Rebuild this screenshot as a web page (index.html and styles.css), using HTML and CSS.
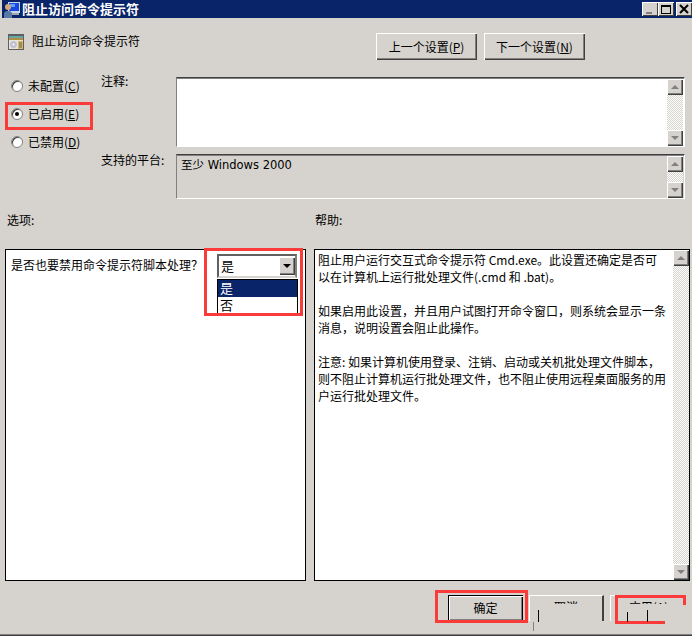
FILE: index.html
```html
<!DOCTYPE html>
<html lang="zh">
<head>
<meta charset="utf-8">
<title>阻止访问命令提示符</title>
<link rel="stylesheet" href="styles.css">
</head>
<body>
<div class="dialog">
  <div class="titlebar">
    <svg class="title-icon" viewBox="0 0 17 17" width="17" height="17">
      <rect x="5" y="1" width="12" height="11" fill="#c8d4e8"/>
      <rect x="6" y="2" width="10" height="8" fill="#1848e0"/>
      <rect x="7" y="3" width="5" height="3" fill="#60a0f8"/>
      <rect x="8" y="12" width="8" height="2" fill="#a0a8b0"/>
      <circle cx="5" cy="6" r="3" fill="#d8a878"/>
      <path d="M1 17 V13 Q1 10 5 10 Q9 10 9 13 V17 Z" fill="#5878a8"/>
    </svg>
    <span class="title-text">阻止访问命令提示符</span>
    <div class="caption-buttons">
      <span class="caption-btn"><span class="glyph-min"></span></span>
      <span class="caption-btn"><span class="glyph-max"></span></span>
      <span class="caption-btn caption-close">
        <svg viewBox="0 0 10 10" width="10" height="10"><path d="M1 1 L9 9 M9 1 L1 9" stroke="#000" stroke-width="2" fill="none"/></svg>
      </span>
    </div>
  </div>

  <div class="header">
    <svg class="policy-icon" viewBox="0 0 16 16" width="16" height="16">
      <rect x="0" y="0" width="16" height="16" fill="#5a6068"/>
      <rect x="1" y="2" width="14" height="2" fill="#68a8a0"/>
      <rect x="1" y="4" width="14" height="2" fill="#b09048"/>
      <rect x="1" y="6" width="14" height="9" fill="#e8e4d8"/>
      <circle cx="5.5" cy="10.5" r="3.5" fill="#c0c0d0"/>
      <circle cx="5.5" cy="10.5" r="1" fill="#fff"/>
      <rect x="10" y="7" width="5" height="8" fill="#d8b860"/>
      <path d="M11 9h3M11 11h3M11 13h3" stroke="#606060" stroke-width="1"/>
    </svg>
    <span class="header-title">阻止访问命令提示符</span>
    <button class="btn nav-btn">上一个设置(<u>P</u>)</button>
    <button class="btn nav-btn">下一个设置(<u>N</u>)</button>
  </div>

  <div class="settings">
    <div class="radios">
      <label class="radio-row"><span class="radio"></span><span>未配置(<u>C</u>)</span></label>
      <label class="radio-row"><span class="radio radio-on"></span><span>已启用(<u>E</u>)</span></label>
      <label class="radio-row"><span class="radio"></span><span>已禁用(<u>D</u>)</span></label>
    </div>
    <div class="fields">
      <div class="field-label">注释:</div>
      <div class="comment-box">
        <div class="box-fill"></div>
        <div class="scrollbar">
          <span class="sb-btn"><span class="arrow-up"></span></span>
          <span class="sb-track"></span>
          <span class="sb-btn"><span class="arrow-down"></span></span>
        </div>
      </div>
      <div class="field-label">支持的平台:</div>
      <div class="platform-box">
        <div class="box-fill platform-text">至少 Windows 2000</div>
        <div class="scrollbar">
          <span class="sb-btn"><span class="arrow-up"></span></span>
          <span class="sb-track"></span>
          <span class="sb-btn"><span class="arrow-down"></span></span>
        </div>
      </div>
    </div>
  </div>

  <div class="section-labels">
    <span>选项:</span>
    <span>帮助:</span>
  </div>

  <div class="panels">
    <div class="panel options-panel">
      <span class="option-question">是否也要禁用命令提示符脚本处理？</span>
      <div class="combo-wrap">
        <div class="combo">
          <span class="combo-value">是</span>
          <span class="combo-btn"><span class="arrow-down arrow-black"></span></span>
        </div>
        <div class="combo-list">
          <div class="combo-item combo-selected">是</div>
          <div class="combo-item">否</div>
        </div>
      </div>
    </div>
    <div class="panel help-panel">
      <div class="help-text">
        <p>阻止用户运行交互式命令提示符 Cmd.exe。此设置还确定是否可<br>以在计算机上运行批处理文件(.cmd 和 .bat)。</p>
        <p>如果启用此设置，并且用户试图打开命令窗口，则系统会显示一条<br>消息，说明设置会阻止此操作。</p>
        <p>注意: 如果计算机使用登录、注销、启动或关机批处理文件脚本，<br>则不阻止计算机运行批处理文件，也不阻止使用远程桌面服务的用<br>户运行批处理文件。</p>
      </div>
      <div class="scrollbar">
        <span class="sb-btn"><span class="arrow-up"></span></span>
        <span class="sb-track"></span>
        <span class="sb-btn"><span class="arrow-down"></span></span>
      </div>
    </div>
  </div>

  <div class="footer">
    <button class="btn ok-btn">确定</button>
    <div class="torn-btn cancel-btn"><span class="torn-text">取消</span></div>
    <div class="torn-btn apply-btn"><span class="torn-text">应用(A)</span></div>
  </div>

  <div class="mark mark-radio"></div>
  <div class="mark mark-combo"></div>
  <div class="mark mark-ok"></div>
  <div class="mark-apply-top"></div>
  <div class="mark-apply-right"></div>
  <div class="mark-apply-left"></div>
  <div class="mark-apply-bottom"></div>
  <div class="tick tick-a"></div>
  <div class="tick tick-b"></div>
  <div class="tick tick-c"></div>
  <div class="tick tick-d"></div>
</div>
</body>
</html>
```
FILE: styles.css
```css
* { box-sizing: border-box; }
html, body { margin: 0; padding: 0; }
body {
  width: 692px;
  height: 636px;
  overflow: hidden;
  background: #d6d3ce;
  font: 12px/14px "Noto Sans CJK SC", "Liberation Sans", sans-serif;
  color: #000;
}
.dialog {
  position: relative;
  width: 692px;
  height: 636px;
  overflow: hidden;
  background: #d6d3ce;
  border-bottom: 1px solid #404040;
  box-shadow: inset 0 -1px 0 #808080;
}
p { margin: 0 0 17px; }

.titlebar {
  height: 18px;
  margin-left: 2px;
  padding-left: 1px;
  display: flex;
  align-items: center;
  background: #0a246a;
  color: #fff;
}
.title-icon { flex: none; }
.title-text { margin-left: 2px; font-size: 13px; font-weight: 700; }
.caption-buttons { margin-left: auto; display: flex; align-items: center; }
.caption-btn {
  width: 16px;
  height: 14px;
  display: flex;
  align-items: center;
  justify-content: center;
  background: #d6d3ce;
  box-shadow: inset 1px 1px 0 #fff, inset -1px -1px 0 #404040;
}
.caption-close { margin-left: 2px; }
.glyph-min { width: 6px; height: 2px; background: #808080; margin-top: 8px; margin-right: 2px; }
.glyph-max { width: 10px; height: 9px; border: 1px solid #000; border-top-width: 2px; }

.header {
  height: 56px;
  padding: 15px 107px 0 8px;
  display: flex;
  align-items: flex-start;
  gap: 7px;
}
.policy-icon { margin-top: 1px; flex: none; }
.header-title { margin-left: 1px; margin-right: auto; line-height: 16px; }

.btn {
  padding: 0;
  border: 0;
  background: #d6d3ce;
  font: inherit;
  color: #000;
  box-shadow: inset 1px 1px 0 #fff, inset -1px -1px 0 #404040, inset -2px -2px 0 #808080;
}
.nav-btn { width: 101px; height: 27px; }

.settings { display: flex; height: 126px; }
.radios {
  width: 101px;
  flex: none;
  padding: 3px 0 0 11px;
  display: flex;
  flex-direction: column;
  gap: 10px;
}
.radio-row { height: 18px; display: flex; align-items: center; gap: 5px; }
.radio {
  width: 12px;
  height: 12px;
  border-radius: 50%;
  background: #fff;
  border: 1px solid #808080;
  box-shadow: inset 1px 1px 0 #404040;
  display: flex;
  align-items: center;
  justify-content: center;
}
.radio-on::after { content: ""; width: 4px; height: 4px; border-radius: 50%; background: #000; }

.fields {
  display: grid;
  grid-template-columns: 75px 509px;
  grid-template-rows: 79px 47px;
}

.comment-box, .platform-box {
  display: flex;
  border: 1px solid #fff;
  border-top-color: #404040;
  border-left-color: #808080;
  box-shadow: inset 0 1px 0 #808080;
}
.comment-box { height: 70px; margin-top: 3px; background: #fff; }
.platform-box { height: 45px; margin-top: 1px; background: #d6d3ce; }
.box-fill { flex: 1; min-width: 0; }
.platform-text { padding: 3px 0 0 4px; font-family: "DejaVu Sans", "Noto Sans CJK SC", sans-serif; font-size: 11.5px; }

.scrollbar { width: 16px; margin-right: 1px; flex: none; display: flex; flex-direction: column; }
.comment-box .scrollbar, .platform-box .scrollbar { margin-top: 1px; }
.sb-btn {
  height: 16px;
  flex: none;
  display: flex;
  align-items: center;
  justify-content: center;
  background: #d6d3ce;
  box-shadow: inset 1px 1px 0 #fff, inset -1px -1px 0 #404040, inset -2px -2px 0 #808080;
}
.sb-track {
  flex: 1;
  background: conic-gradient(#fff 25%, #d6d3ce 0 50%, #fff 0 75%, #d6d3ce 0) 0 0 / 2px 2px;
}
.arrow-up, .arrow-down { width: 0; height: 0; border-left: 4px solid transparent; border-right: 4px solid transparent; }
.arrow-up { border-bottom: 4px solid #808080; }
.arrow-down { border-top: 4px solid #808080; }
.arrow-black { border-top-color: #000; }

.section-labels {
  height: 36px;
  margin-top: 13px;
  padding-left: 7px;
  display: grid;
  grid-template-columns: 308px 1fr;
}

.panels {
  height: 332px;
  padding: 0 2px 0 5px;
  display: grid;
  grid-template-columns: 301px 376px;
  column-gap: 8px;
}
.panel { background: #fff; border: 1px solid #000; }
.options-panel { display: flex; padding: 7px 0 0 5px; }
.option-question { flex: none; width: 196px; line-height: 16px; }
.combo-wrap { margin-left: 10px; margin-top: -3px; width: 81px; }
.combo {
  width: 80px;
  height: 24px;
  display: flex;
  align-items: center;
  border: 2px solid #606060;
  border-right-color: #808080;
  border-bottom-color: #d6d3ce;
  background: #fff;
}
.combo-value { flex: 1; padding-left: 2px; font-size: 13px; }
.combo-btn {
  width: 16px;
  height: 18px;
  display: flex;
  align-items: center;
  justify-content: center;
  background: #d6d3ce;
  box-shadow: inset 1px 1px 0 #fff, inset -1px -1px 0 #404040, inset -2px -2px 0 #808080;
}
.combo-list { border: 1px solid #000; border-bottom: 0; margin-top: 1px; height: 35px; }
.combo-item { height: 17px; line-height: 15px; padding-left: 2px; font-size: 13px; }
.combo-selected { background: #0a246a; color: #fff; }

.help-panel { display: flex; }
.help-text { flex: 1; min-width: 0; padding: 1px 0 0 3px; line-height: 17px; white-space: nowrap; overflow: hidden; }
.help-panel .scrollbar { margin-right: 0; }

.footer {
  height: 53px;
  padding-top: 14px;
  display: flex;
  align-items: flex-start;
}
.ok-btn {
  margin-left: 448px;
  width: 75px;
  height: 26px;
  box-shadow: inset 1px 1px 0 #000, inset 2px 2px 0 #fff, inset -1px -1px 0 #000, inset -2px -2px 0 #808080;
}
.torn-btn {
  height: 26px;
  display: flex;
  justify-content: center;
  overflow: hidden;
  border-top: 1px solid #fff;
  border-left: 1px solid #fff;
}
.cancel-btn { margin-left: 6px; width: 75px; border-right: 2px solid #404040; }
.apply-btn { margin-left: 6px; width: 76px; }
.torn-text { display: block; height: 11px; margin-top: 4px; overflow: hidden; line-height: 14px; clip-path: inset(0 0 7px 0); }

.mark { position: absolute; border: 3px solid #fb3a3a; }
.mark-radio { left: 5px; top: 102px; width: 88px; height: 28px; }
.mark-combo { left: 204px; top: 248px; width: 99px; height: 68px; }
.mark-ok { left: 435px; top: 590px; width: 93px; height: 33px; }
.mark-apply-top, .mark-apply-right, .mark-apply-left, .mark-apply-bottom { position: absolute; background: #fb3a3a; }
.mark-apply-top { left: 615px; top: 595px; width: 70px; height: 3px; }
.mark-apply-right { left: 683px; top: 595px; width: 3px; height: 10px; }
.mark-apply-left { left: 615px; top: 595px; width: 3px; height: 29px; }
.mark-apply-bottom { left: 615px; top: 621px; width: 50px; height: 3px; }
.tick { position: absolute; width: 1px; background: #000; }
.tick-a { left: 538px; top: 610px; height: 12px; }
.tick-b { left: 533px; top: 622px; height: 9px; background: #808080; }
.tick-c { left: 627px; top: 612px; height: 10px; }
.tick-d { left: 647px; top: 610px; height: 12px; }
```
